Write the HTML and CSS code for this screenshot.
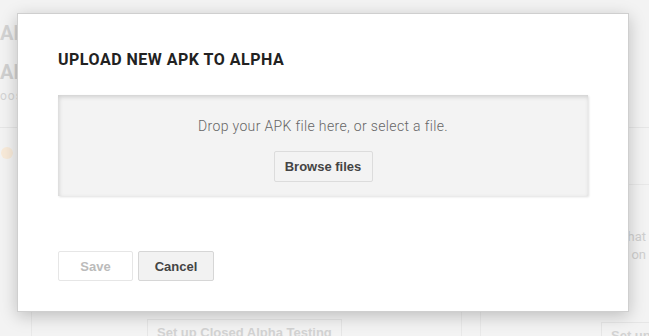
FILE: index.html
```html
<!DOCTYPE html>
<html>
<head>
<meta charset="utf-8">
<link rel="stylesheet" href="styles.css">
</head>
<body>
<div class="page">
  <div class="head">
    <div class="h-title">ALPHA</div>
    <div class="h-sub">AN</div>
    <div class="h-note">oos</div>
  </div>
  <div class="rule"></div>
  <div class="mid">
    <div class="mid-left"><span class="dot"></span></div>
    <div class="mid-right">
      <div class="mr-gap"></div>
      <div class="mr-line"></div>
      <div class="mr-text">Use this track to test that<br>a specific version on</div>
    </div>
  </div>
  <div class="cards">
    <div class="card card-a"><span class="bg-btn">Set up Closed Alpha Testing</span></div>
    <div class="card card-b"><span class="bg-btn">Set up Open</span></div>
  </div>
</div>

<div class="dialog">
  <h1 class="d-title">UPLOAD NEW APK TO ALPHA</h1>
  <div class="drop">
    <p class="drop-text">Drop your APK file here, or select a file.</p>
    <button class="btn btn-browse">Browse files</button>
  </div>
  <div class="actions">
    <button class="btn btn-save" disabled>Save</button>
    <button class="btn btn-cancel">Cancel</button>
  </div>
</div>
</body>
</html>
```
FILE: styles.css
```css
html, body {
  margin: 0;
  padding: 0;
}
body {
  width: 649px;
  height: 336px;
  overflow: hidden;
  background: #f3f3f3;
  font-family: Roboto, "Liberation Sans", sans-serif;
  position: relative;
}

/* faded page behind the dialog */
.page {
  display: flex;
  flex-direction: column;
}
.head {
  padding-top: 20px;
  height: 127px;
  box-sizing: border-box;
}
.h-title {
  font-weight: 700;
  font-size: 20px;
  color: #d3d3d3;
  line-height: 26px;
}
.h-sub {
  margin-top: 13px;
  font-weight: 700;
  font-size: 20px;
  color: #d0d0d0;
  line-height: 26px;
}
.h-note {
  margin-top: 4px;
  font-size: 12px;
  color: #d3d3d3;
  letter-spacing: 1px;
}
.rule {
  height: 1px;
  background: #e6e6e6;
}
.mid {
  display: flex;
  height: 180px;
}
.mid-left {
  width: 628px;
  flex: none;
  padding-top: 19px;
}
.dot {
  display: block;
  width: 12px;
  height: 12px;
  border-radius: 50%;
  background: #f8ead9;
  margin-left: 1px;
}
.mid-right {
  flex: 1;
  display: flex;
  flex-direction: column;
  min-width: 0;
}
.mr-gap { height: 56px; }
.mr-line { height: 1px; background: #e8e8e8; }
.mr-text {
  margin-top: 43px;
  margin-left: -168px;
  width: 186px;
  font-size: 13px;
  line-height: 18px;
  color: #cfcfcf;
  white-space: nowrap;
  text-align: right;
}
.cards {
  display: flex;
}
.card {
  height: 28px;
  border-left: 1px solid #e9e9e9;
  border-right: 1px solid #e9e9e9;
  box-sizing: border-box;
  flex: none;
  white-space: nowrap;
}
.card-a {
  margin-left: 31px;
  width: 431px;
  padding-left: 115px;
  padding-top: 11px;
}
.card-b {
  margin-left: 18px;
  width: 200px;
  padding-left: 120px;
  padding-top: 14px;
}
.bg-btn {
  display: inline-block;
  border: 1px solid #e6e6e6;
  border-bottom: 0;
  padding: 5px 9px 0;
  height: 12px;
  font-family: "Liberation Sans", Arial, sans-serif;
  font-weight: 700;
  font-size: 13px;
  line-height: 16px;
  color: #d2d2d2;
  overflow: hidden;
  vertical-align: top;
}

/* dialog */
.dialog {
  position: absolute;
  left: 17px;
  top: 13px;
  width: 612px;
  height: 299px;
  box-sizing: border-box;
  background: #fff;
  border: 1px solid #cfcfcf;
  box-shadow: 0 4px 16px rgba(0,0,0,0.22);
  padding: 36px 40px 0;
}
.d-title {
  margin: 0;
  font-family: Roboto, sans-serif;
  font-weight: 700;
  font-size: 16px;
  line-height: 20px;
  color: #222;
  letter-spacing: 0.5px;
}
.drop {
  margin-top: 25px;
  height: 101px;
  box-sizing: border-box;
  background: #f3f3f3;
  box-shadow: inset 1px 2px 4px rgba(0,0,0,0.15), 1px 1px 2px rgba(0,0,0,0.12);
  display: flex;
  flex-direction: column;
  align-items: center;
  padding-top: 21px;
}
.drop-text {
  margin: 0;
  font-family: Roboto, sans-serif;
  font-weight: 300;
  font-size: 14px;
  line-height: 20px;
  color: #666;
  letter-spacing: 0.35px;
}
.btn {
  font-family: "Liberation Sans", Arial, sans-serif;
  font-weight: 700;
  font-size: 13px;
  box-sizing: border-box;
  border-radius: 2px;
  padding: 0;
  cursor: pointer;
}
.btn-browse {
  margin-top: 15px;
  width: 99px;
  height: 31px;
  background: #f3f3f3;
  border: 1px solid #dcdcdc;
  color: #444;
}
.actions {
  margin-top: 55px;
  display: flex;
  gap: 5px;
}
.btn-save {
  width: 75px;
  height: 30px;
  background: #fff;
  border: 1px solid #e6e6e6;
  color: #bbb;
}
.btn-cancel {
  width: 76px;
  height: 30px;
  background: #f2f2f2;
  border: 1px solid #d6d6d6;
  color: #444;
}
```
